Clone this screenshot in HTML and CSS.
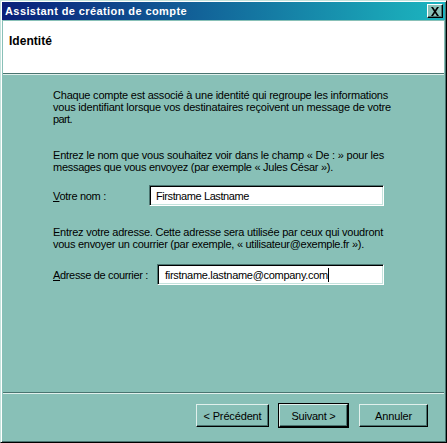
FILE: index.html
```html
<!DOCTYPE html>
<html lang="fr">
<head>
<meta charset="utf-8">
<title>Assistant de création de compte</title>
<link rel="stylesheet" href="styles.css">
</head>
<body>
<div class="window">
  <div class="titlebar">
    <span class="title" data-w="182">Assistant de création de compte</span>
    <span class="close"><svg width="10" height="9" viewBox="0 0 10 9"><path d="M1 0h2l2 3 2-3h2L6 4.5 9 9H7L5 6 3 9H1l3-4.5z" fill="#000"/></svg></span>
  </div>
  <div class="header"><span class="heading" data-w="43">Identité</span></div>
  <div class="sep"></div>
  <div class="content">
    <p class="para p1"><span data-w="335">Chaque compte est associé à une identité qui regroupe les informations</span><br><span data-w="338">vous identifiant lorsque vos destinataires reçoivent un message de votre</span><br><span data-w="19">part.</span></p>
    <p class="para p2"><span data-w="331">Entrez le nom que vous souhaitez voir dans le champ « De : » pour les</span><br><span data-w="280">messages que vous envoyez (par exemple « Jules César »).</span></p>
    <div class="field f1">
      <label class="label lbl1"><span data-w="53"><u>V</u>otre nom :</span></label>
      <div class="input in1"><span data-w="93">Firstname Lastname</span></div>
    </div>
    <p class="para p3"><span data-w="330">Entrez votre adresse. Cette adresse sera utilisée par ceux qui voudront</span><br><span data-w="311">vous envoyer un courrier (par exemple, « utilisateur@exemple.fr »).</span></p>
    <div class="field f2">
      <label class="label lbl2"><span data-w="95"><u>A</u>dresse de courrier :</span></label>
      <div class="input in2"><span data-w="163">firstname.lastname@company.com</span><span class="caret"></span></div>
    </div>
  </div>
  <div class="sep"></div>
  <div class="footer">
    <button class="btn prev"><span data-w="58">&lt; Précédent</span></button>
    <button class="btn next default"><span data-w="44">Suivant &gt;</span></button>
    <button class="btn cancel"><span data-w="37">Annuler</span></button>
  </div>
</div>
<script src="script.js"></script>
</body>
</html>
```

FILE: styles.css
```css
* { box-sizing: border-box; }
html, body { margin: 0; padding: 0; background: #88c0b7; }
body { font-family: "Liberation Sans", Arial, sans-serif; font-size: 11px; color: #000; }

.window {
  width: 447px;
  height: 443px;
  display: flex;
  flex-direction: column;
  background: #88c0b7;
  border-style: solid;
  border-width: 1px;
  border-color: #c4e2dc #000 #000 #c4e2dc;
  box-shadow: inset 1px 1px 0 #fff, inset -1px -1px 0 #4a7470;
  padding: 1px;
}

.titlebar {
  height: 18px;
  display: flex;
  align-items: center;
  justify-content: space-between;
  padding: 0 2px 0 3px;
  background: linear-gradient(to right, #0a1f7a, #1aa8b8 90%, #1cb4c0);
}
.title {
  color: #fff;
  font-weight: bold;
  font-size: 11px;
  white-space: nowrap;
}
.close {
  width: 16px;
  height: 14px;
  display: flex;
  align-items: center;
  justify-content: center;
  background: #88c0b7;
  border: 1px solid;
  border-color: #fff #000 #000 #fff;
  box-shadow: inset -1px -1px 0 #4a7470;
}

.header {
  margin: 1px 1px 0;
  height: 52px;
  background: #fff;
  padding: 13px 0 0 6px;
}
.heading { font-weight: bold; font-size: 12px; }

.sep {
  height: 2px;
  margin: 0 1px;
  border-top: 1px solid #4a7470;
  border-bottom: 1px solid #e0f0ec;
}

.content {
  flex: 1;
  padding: 14px 0 0 51px;
}
.para { margin: 0; line-height: 12px; white-space: nowrap; }
.p2 { margin-top: 24px; }
.p3 { margin-top: 20px; }

.field { display: flex; align-items: center; }
.f1 { margin-top: 12px; }
.f2 { margin-top: 14px; }
.label { line-height: 12px; white-space: nowrap; }
.lbl1 { width: 96px; }
.lbl2 { width: 104px; }

.input {
  height: 21px;
  background: #fff;
  border: 1px solid;
  border-color: #4a7470 #fff #fff #4a7470;
  box-shadow: inset 1px 1px 0 #000, inset -1px -1px 0 #c4e2dc;
  padding: 0 0 0 6px;
  display: flex;
  align-items: center;
  line-height: 12px;
  white-space: nowrap;
}
.in1 { width: 235px; }
.in2 { width: 227px; padding-left: 7px; }
.caret { display: inline-block; width: 1px; height: 14px; background: #000; }

.footer {
  height: 47px;
  display: flex;
  align-items: flex-start;
  padding: 10px 0 0 194px;
}
.btn {
  height: 23px;
  font-family: "Liberation Sans", Arial, sans-serif;
  font-size: 11px;
  color: #000;
  background: #88c0b7;
  border: 1px solid;
  border-color: #e0f0ec #000 #000 #e0f0ec;
  box-shadow: inset -1px -1px 0 #4a7470;
  padding: 0;
  margin: 0;
  white-space: nowrap;
}
.prev { width: 73px; }
.next { width: 69px; margin-left: 10px; }
.cancel { width: 69px; margin-left: 11px; }
.btn.default {
  box-shadow: inset -1px -1px 0 #4a7470, 0 0 0 1px #000;
}
```

FILE: script.js
```js
document.querySelectorAll('[data-w]').forEach(function (el) {
  el.style.letterSpacing = '0px';
  var w = el.getBoundingClientRect().width;
  var n = el.textContent.length;
  var t = parseFloat(el.getAttribute('data-w'));
  if (n > 0) {
    el.style.letterSpacing = ((t - w) / n).toFixed(3) + 'px';
  }
});
```
